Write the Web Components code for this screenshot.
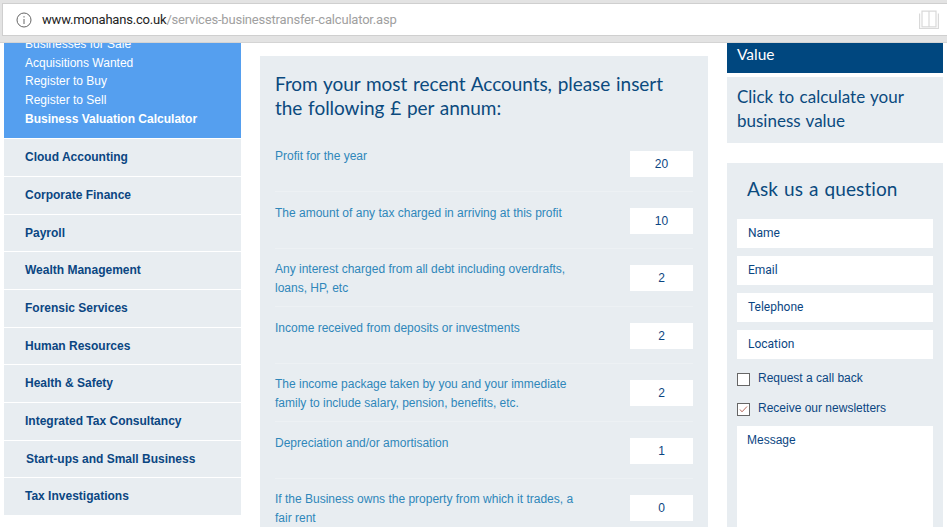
<!DOCTYPE html>
<html lang="en">
<head>
<meta charset="utf-8">
<title>Business valuation calculator</title>
<style>
html, body { margin: 0; height: 527px; overflow: hidden; background: #fff; }
body { font: 12px/19px "Liberation Sans", Arial, sans-serif; }
#page {
    display: grid;
    grid-template-columns: 237px 448px 216px;
    column-gap: 19px;
    padding-left: 4px;
    height: 484px;
    overflow: hidden;
}
</style>
</head>
<body>
<browser-bar host="www.monahans.co.uk" path="/services-businesstransfer-calculator.asp"></browser-bar>
<div id="page">
    <side-nav>
        <sub-link>Businesses for Sale</sub-link>
        <sub-link>Acquisitions Wanted</sub-link>
        <sub-link>Register to Buy</sub-link>
        <sub-link>Register to Sell</sub-link>
        <sub-link current>Business Valuation Calculator</sub-link>
        <nav-item slot="items">Cloud Accounting</nav-item>
        <nav-item slot="items">Corporate Finance</nav-item>
        <nav-item slot="items">Payroll</nav-item>
        <nav-item slot="items">Wealth Management</nav-item>
        <nav-item slot="items">Forensic Services</nav-item>
        <nav-item slot="items">Human Resources</nav-item>
        <nav-item slot="items">Health &amp; Safety</nav-item>
        <nav-item slot="items">Integrated Tax Consultancy</nav-item>
        <nav-item slot="items" nudge>Start-ups and Small Business</nav-item>
        <nav-item slot="items">Tax Investigations</nav-item>
    </side-nav>
    <calc-panel>
        <span slot="title">From your most recent Accounts, please insert the following £ per annum:</span>
        <calc-row value="20">Profit for the year</calc-row>
        <calc-row value="10">The amount of any tax charged in arriving at this profit</calc-row>
        <calc-row value="2" two>Any interest charged from all debt including overdrafts, loans, HP, etc</calc-row>
        <calc-row value="2">Income received from deposits or investments</calc-row>
        <calc-row value="2" two>The income package taken by you and your immediate family to include salary, pension, benefits, etc.</calc-row>
        <calc-row value="1">Depreciation and/or amortisation</calc-row>
        <calc-row value="0" two>If the Business owns the property from which it trades, a fair rent</calc-row>
    </calc-panel>
    <div>
        <value-promo heading="Value">Click to calculate your business value</value-promo>
        <ask-form>
            <form-field>Name</form-field>
            <form-field>Email</form-field>
            <form-field>Telephone</form-field>
            <form-field>Location</form-field>
            <check-row>Request a call back</check-row>
            <check-row checked>Receive our newsletters</check-row>
            <form-field message>Message</form-field>
        </ask-form>
    </div>
</div>

<script>
function define(name, css, html, setup) {
    customElements.define(name, class extends HTMLElement {
        constructor() {
            super();
            this.attachShadow({ mode: 'open' });
            this.shadowRoot.innerHTML = `<style>${css}</style>${html}`;
        }
        connectedCallback() {
            if (setup) setup(this, this.shadowRoot);
        }
    });
}

define('browser-bar', `
:host { display: block; height: 43px; box-sizing: border-box; background: #e3e3e3; padding-top: 3px; border-bottom: 1px solid #d4d4d4; }
.box { height: 33px; box-sizing: border-box; margin-left: 2px; background: #fff; border: 1px solid #cfcfcf; border-right: 0;
       display: flex; align-items: center; padding: 0 8px 0 13px; }
.info { width: 16px; height: 16px; flex: none; }
.url { margin-left: 10px; padding-top: 1px; flex: 1; font: 13px/20px Roboto, sans-serif; letter-spacing: -.2px; color: #222; white-space: nowrap; }
.url b { font-weight: 400; }
.url span { color: #a0a0a0; }
.book { width: 20px; height: 19px; flex: none; }
`, `
<div class="box">
<svg class="info" viewBox="0 0 16 16" fill="none" stroke="#666" stroke-width="1">
    <circle cx="8" cy="8" r="7"/>
    <path d="M8 7v5M8 4.2v1.3"/>
</svg>
<div class="url"><b id="h"></b><span id="p"></span></div>
<svg class="book" viewBox="0 0 20 19" fill="none" stroke="#d9d9d9" stroke-width="1.2">
    <path d="M.6 3.5v15h18.8v-15"/>
    <path d="M3 1.2h6.6c.3 0 .4.3.4.6v15H3zM10 1.8c0-.3.1-.6.4-.6H17v15.6h-7"/>
</svg>
</div>
`, (el, root) => {
    root.querySelector('#h').textContent = el.getAttribute('host');
    root.querySelector('#p').textContent = el.getAttribute('path');
});

define('side-nav', `
:host { display: block; }
.sub { background: #559fef; height: 95px; overflow: hidden; }
.list { padding: 0 21px; margin-top: -8px; }
.items { display: flex; flex-direction: column; gap: 1px; margin-top: 1.4px; }
`, `
<div class="sub"><div class="list"><slot></slot></div></div>
<div class="items"><slot name="items"></slot></div>
`);

define('sub-link', `
:host { display: block; color: #fff; height: 18.7px; line-height: 19px; }
:host([current]) { font-weight: bold; }
`, `<slot></slot>`);

define('nav-item', `
:host { display: block; height: 36.67px; line-height: 37px; padding-left: 21px; background: #e8edf1; color: #0b4682; font-weight: bold; }
:host([nudge]) { padding-left: 22px; }
`, `<slot></slot>`);

define('calc-panel', `
:host { display: block; margin-top: 13px; background: #e8edf1; padding: 16px 15px 0; }
h2 { margin: 0 0 14.6px; font: 400 19px/24px Lato, sans-serif; letter-spacing: -.05px; word-spacing: 1px; color: #0b4a7e; width: 410px; }
`, `
<h2><slot name="title"></slot></h2>
<slot></slot>
`);

define('calc-row', `
:host { display: flex; justify-content: space-between; align-items: flex-start; height: 57.4px; box-sizing: border-box;
        border-bottom: 1px solid #edf1f4; color: #2f87ba; line-height: 18.7px; }
.label { width: 300px; padding-top: 12px; }
:host([two]) .label { padding-top: 11px; }
.val { width: 63px; height: 26px; margin-top: 16px; background: #fff; color: #0b4682; text-align: center; line-height: 26px; }
`, `
<div class="label"><slot></slot></div>
<div class="val"></div>
`, (el, root) => {
    root.querySelector('.val').textContent = el.getAttribute('value');
});

define('value-promo', `
:host { display: block; }
.head { height: 30px; background: #00477f; color: #fff; padding-left: 10px; font: 400 15.5px/22px Lato, sans-serif; box-sizing: border-box; }
.body { margin-top: 4px; height: 66px; box-sizing: border-box; padding: 8px 10px 0; background: #e8edf1; color: #0b4a7e;
        font: 400 17px/24px Lato, sans-serif; word-spacing: 1px; }
`, `
<div class="head"></div>
<div class="body"><slot></slot></div>
`, (el, root) => {
    root.querySelector('.head').textContent = el.getAttribute('heading');
});

define('ask-form', `
:host { display: block; margin-top: 20px; background: #e8edf1; padding: 12px 10px 0; height: 400px; box-sizing: border-box; }
h2 { margin: 0 0 16px 10px; font: 400 19px/28px Lato, sans-serif; letter-spacing: .1px; word-spacing: 1px; color: #0b4a7e; }
.fields { display: flex; flex-direction: column; }
`, `
<h2>Ask us a question</h2>
<div class="fields"><slot></slot></div>
`);

define('form-field', `
:host { display: block; height: 29px; margin-bottom: 8px; padding-left: 11px; background: #fff; color: #0b4682; line-height: 28px; font-family: Roboto, sans-serif; }
:host([message]) { height: 200px; margin: -1px 0 0; padding-left: 10px; line-height: 28px; font-family: "Liberation Sans", sans-serif; }
`, `<slot></slot>`);

define('check-row', `
:host { display: flex; align-items: center; height: 30px; margin: -4px 0 4px; color: #0b4682; }
.box { width: 11px; height: 11px; border: 1px solid #666; background: #fff; margin-right: 8px; flex: none; margin-top: 3px; }
svg { display: none; width: 11px; height: 11px; }
:host([checked]) svg { display: block; }
`, `
<div class="box"><svg viewBox="0 0 11 11" fill="none" stroke="#b4675a"><path d="M2 5.5l2 2.3 5-5.3"/></svg></div>
<slot></slot>
`);
</script>
</body>
</html>
